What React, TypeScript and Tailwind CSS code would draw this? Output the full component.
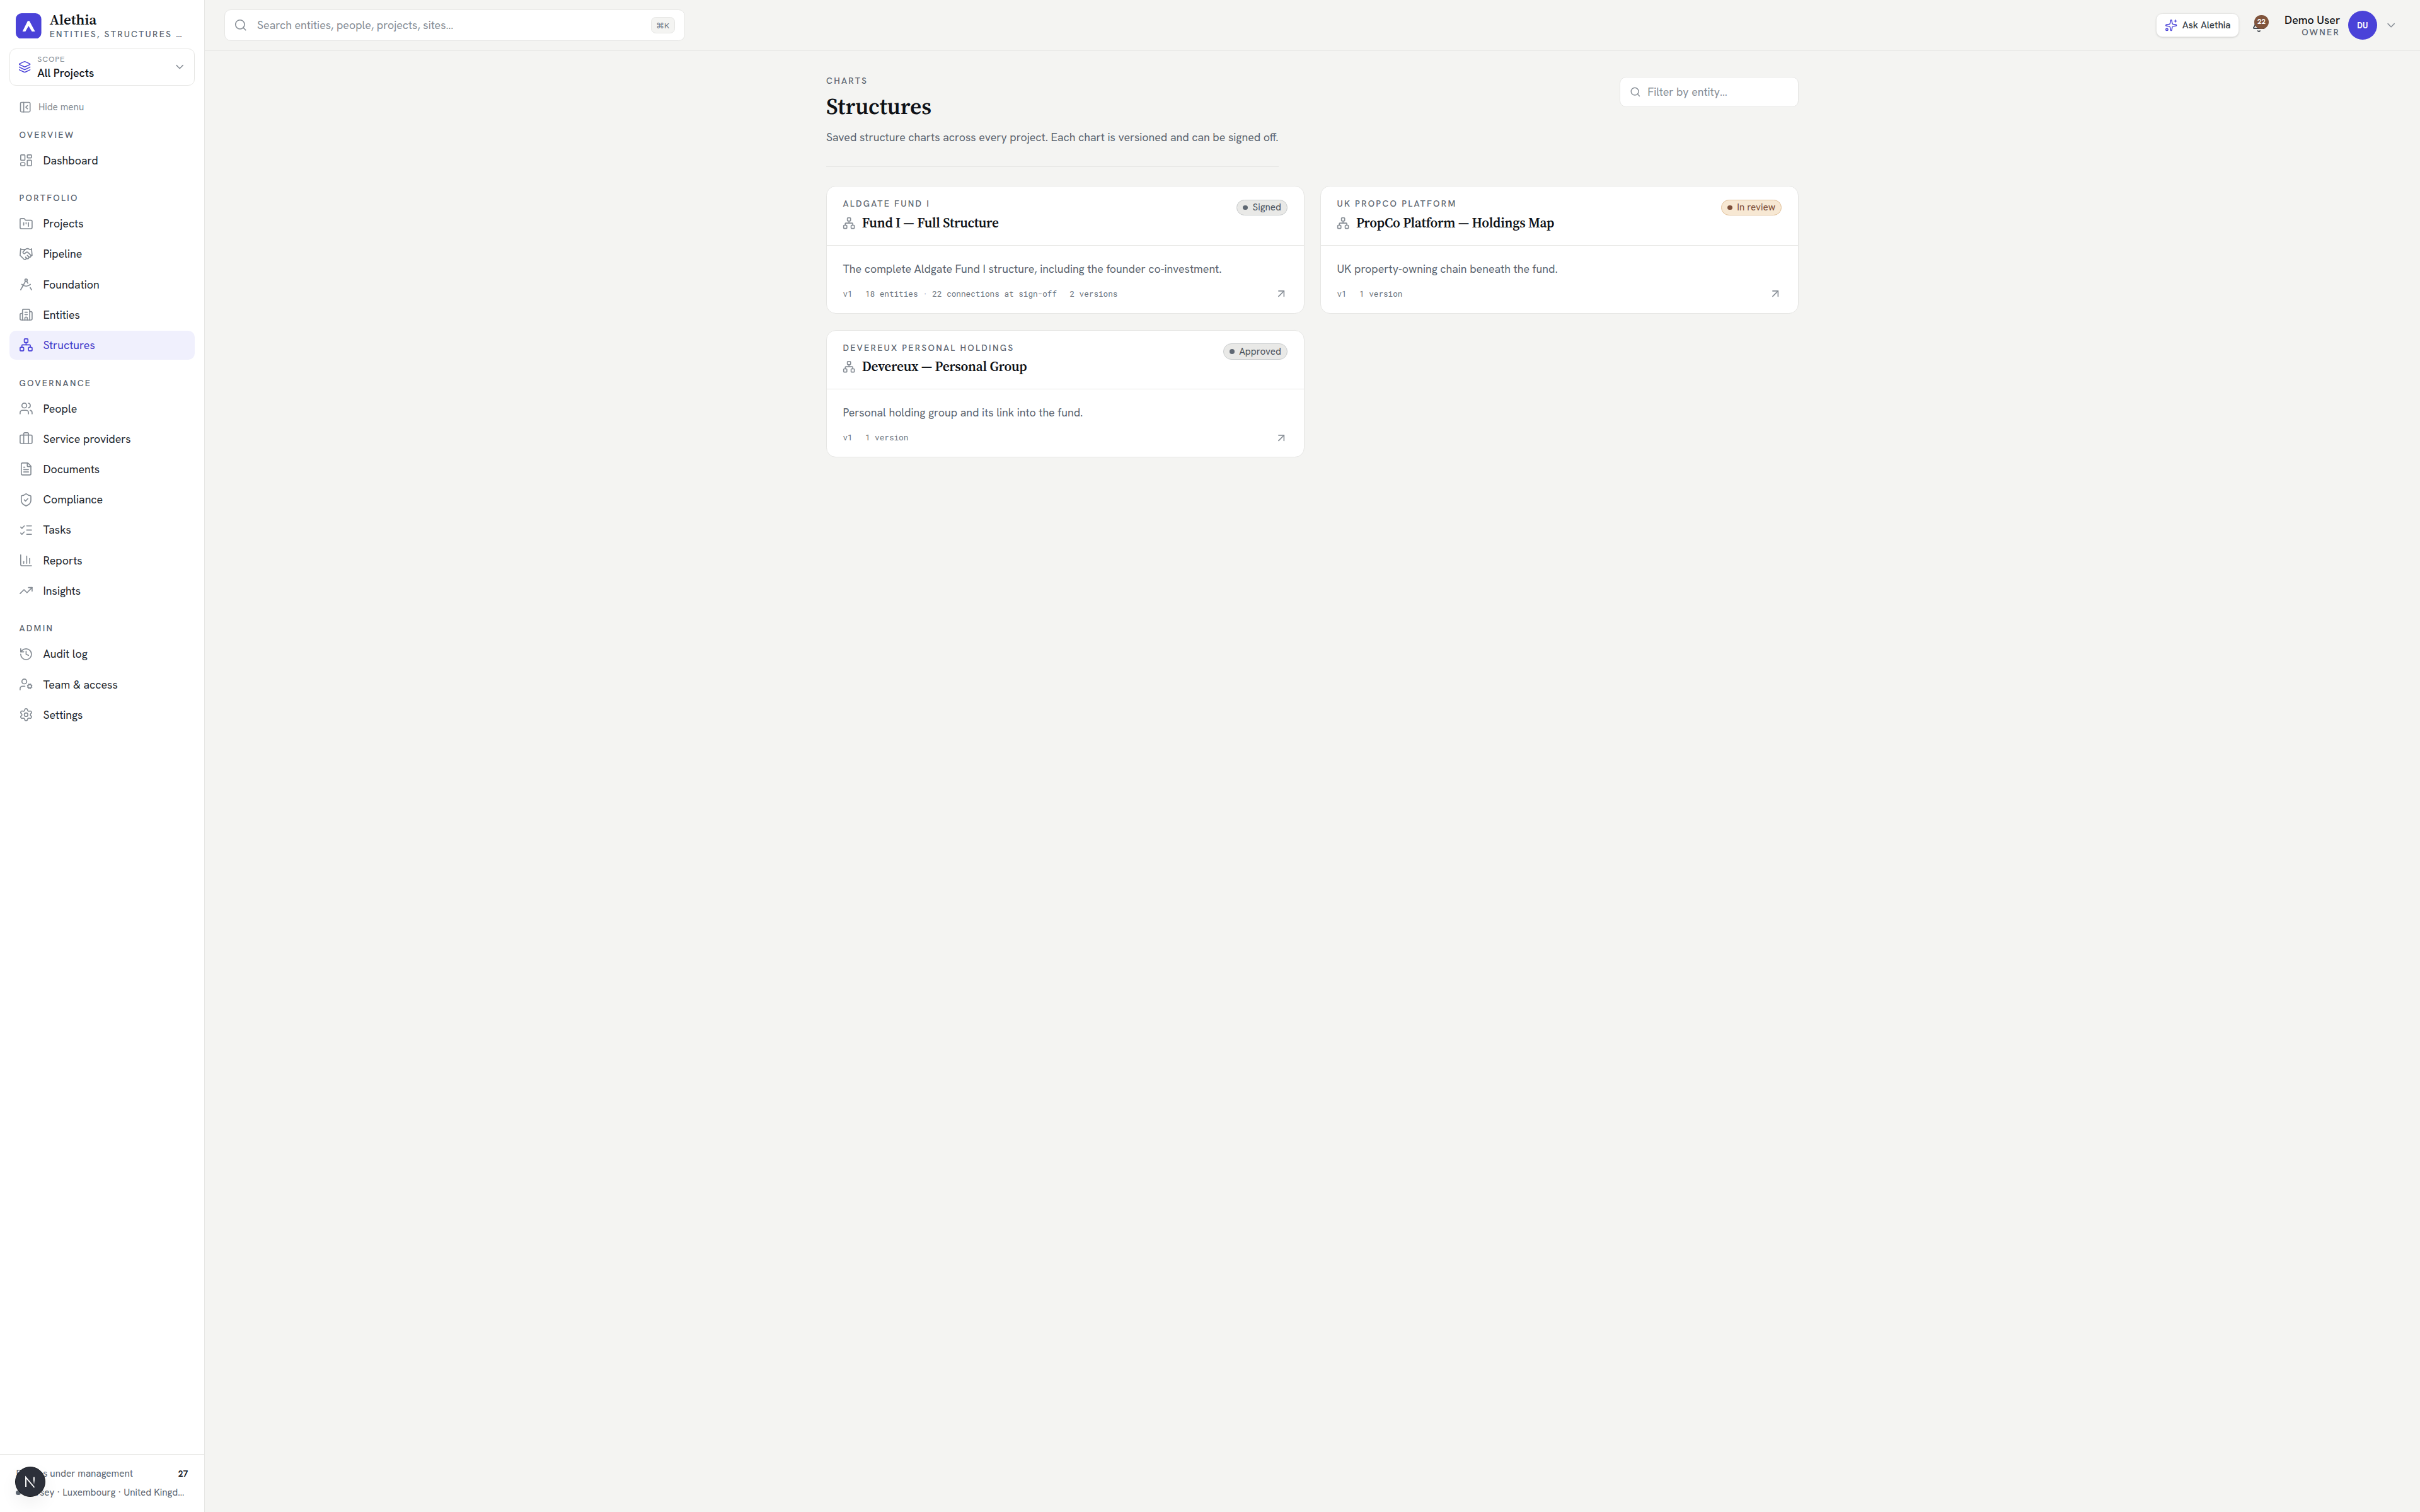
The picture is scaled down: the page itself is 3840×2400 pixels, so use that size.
import React from 'react';
import {
  ArrowUpRight, Bell, Briefcase, Building2, ChartColumn, ChevronDown, DraftingCompass, FileText,
  FolderKanban, Handshake, History, Layers, LayoutDashboard, ListChecks, Network, PanelLeftClose,
  Search, Settings, ShieldCheck, Sparkles, TrendingUp, UserCog, Users, type LucideIcon,
} from 'lucide-react';

const NAV: { title: string; items: { label: string; icon: LucideIcon; active?: boolean }[] }[] = [
  { title: 'Overview', items: [{ label: 'Dashboard', icon: LayoutDashboard }] },
  {
    title: 'Portfolio',
    items: [
      { label: 'Projects', icon: FolderKanban },
      { label: 'Pipeline', icon: Handshake },
      { label: 'Foundation', icon: DraftingCompass },
      { label: 'Entities', icon: Building2 },
      { label: 'Structures', icon: Network, active: true },
    ],
  },
  {
    title: 'Governance',
    items: [
      { label: 'People', icon: Users },
      { label: 'Service providers', icon: Briefcase },
      { label: 'Documents', icon: FileText },
      { label: 'Compliance', icon: ShieldCheck },
      { label: 'Tasks', icon: ListChecks },
      { label: 'Reports', icon: ChartColumn },
      { label: 'Insights', icon: TrendingUp },
    ],
  },
  {
    title: 'Admin',
    items: [
      { label: 'Audit log', icon: History },
      { label: 'Team & access', icon: UserCog },
      { label: 'Settings', icon: Settings },
    ],
  },
];

type Status = 'Signed' | 'In review' | 'Approved';

const CHARTS: { project: string; title: string; status: Status; description: string; meta: string[] }[] = [
  {
    project: 'Aldgate Fund I',
    title: 'Fund I — Full Structure',
    status: 'Signed',
    description: 'The complete Aldgate Fund I structure, including the founder co-investment.',
    meta: ['v1', '18 entities · 22 connections at sign-off', '2 versions'],
  },
  {
    project: 'UK PropCo Platform',
    title: 'PropCo Platform — Holdings Map',
    status: 'In review',
    description: 'UK property-owning chain beneath the fund.',
    meta: ['v1', '1 version'],
  },
  {
    project: 'Devereux Personal Holdings',
    title: 'Devereux — Personal Group',
    status: 'Approved',
    description: 'Personal holding group and its link into the fund.',
    meta: ['v1', '1 version'],
  },
];

function Eyebrow({ children, className = '' }: { children: React.ReactNode; className?: string }) {
  return (
    <div className={`text-[0.6875rem] font-medium uppercase tracking-[0.165em] text-[#5b6570] ${className}`}>
      {children}
    </div>
  );
}

function StatusBadge({ status }: { status: Status }) {
  const review = status === 'In review';
  return (
    <span
      className={`mt-[0.4px] flex h-[1.25rem] shrink-0 items-center gap-1.5 rounded-full border px-[9.4px] text-xs ${
        review ? 'border-[#e2c19a] bg-[#f7e8d3] text-[#7d4f3a]' : 'border-[#c9cccd] bg-[#e9e9e7] text-[#4b535c]'
      }`}
    >
      <span className={`size-1.5 rounded-full ${review ? 'bg-[#7d4f3a]' : 'bg-[#5f6873]'}`} />
      {status}
    </span>
  );
}

function ChartCard({ chart }: { chart: (typeof CHARTS)[number] }) {
  return (
    <article className="rounded-xl border border-[#e6e6e4] bg-white">
      <div className="flex items-start justify-between border-b border-[#e6e6e4] px-5 py-4">
        <div>
          <Eyebrow className="leading-[14px]">{chart.project}</Eyebrow>
          <div className="mt-[8.3px] flex h-[30px] items-center gap-2">
            <Network className="size-4 text-[#868d95]" strokeWidth={1.9} />
            <h2 className="font-['Source_Serif_4','Liberation_Serif',serif] text-[21.2px] font-semibold tracking-[-0.01em] text-[#0e1116]">
              {chart.title}
            </h2>
          </div>
        </div>
        <StatusBadge status={chart.status} />
      </div>
      <div className="px-5 pb-4 pt-[21.8px]">
        <p className="text-sm leading-[29px] text-[#5b6570]">{chart.description}</p>
        <div className="mt-[15.6px] flex h-4 items-center justify-between">
          <div className="flex gap-4 font-['Roboto_Mono','Liberation_Mono',monospace] text-[0.625rem] text-[#6a737d]">
            {chart.meta.map((m) => (
              <span key={m}>{m}</span>
            ))}
          </div>
          <ArrowUpRight className="size-4 text-[#868d95]" strokeWidth={1.9} />
        </div>
      </div>
    </article>
  );
}

function Sidebar() {
  return (
    <aside className="flex w-64 shrink-0 flex-col border-r border-[#e6e6e4] bg-white">
      <div className="flex h-[77px] items-start gap-2.5 px-5 pt-[20.6px]">
        <svg viewBox="0 0 122 122" className="size-8 shrink-0">
          <rect width="122" height="122" rx="28" fill="#4a42d8" />
          <path d="M57 37h8l27 50H77L61 61 46 87H32z" fill="#fff" />
        </svg>
        <div className="min-w-0">
          <div className="-mt-[0.5px] font-['Source_Serif_4','Liberation_Serif',serif] text-lg font-semibold leading-[23px] text-[#0e1116]">
            Alethia
          </div>
          <Eyebrow className="mt-[2.2px] whitespace-nowrap leading-[18px]">Entities, structures …</Eyebrow>
        </div>
      </div>

      <button className="mx-3 flex h-[59px] items-center gap-2 rounded-lg border border-[#e6e6e4] px-2.5 text-left">
        <Layers className="size-4 text-[#4a42d8]" strokeWidth={1.75} />
        <span className="flex-1">
          <span className="block text-[0.625rem] leading-[18px] tracking-[0.06em] text-[#868d95]">SCOPE</span>
          <span className="block text-sm font-medium leading-[26px] text-[#0e1116]">All Projects</span>
        </span>
        <ChevronDown className="size-4 text-[#868d95]" strokeWidth={1.75} />
      </button>

      <button className="mx-3 mt-[20.4px] flex h-[27px] items-center gap-2 px-3 text-xs text-[#868d95]">
        <PanelLeftClose className="size-4" strokeWidth={1.9} />
        Hide menu
      </button>

      <nav className="flex-1 px-3 pt-[20.2px]">
        {NAV.map((group, i) => (
          <div key={group.title} className={i > 0 ? 'mt-[26.9px]' : ''}>
            <Eyebrow className="mb-[7px] px-3 leading-[21px]">{group.title}</Eyebrow>
            <div className="flex flex-col gap-0.5">
              {group.items.map(({ label, icon: Icon, active }) => (
                <a
                  key={label}
                  className={`flex h-9 items-center gap-3 rounded-lg px-3 text-sm ${
                    active ? 'bg-[#f0f0fd] text-[#4038c8]' : 'text-[#22272e]'
                  }`}
                >
                  <Icon className={`size-[1.125rem] ${active ? 'text-[#4a42d8]' : 'text-[#868d95]'}`} strokeWidth={1.75} />
                  {label}
                </a>
              ))}
            </div>
          </div>
        ))}
      </nav>

      <div className="relative flex flex-col gap-2 border-t border-[#e6e6e4] px-5 py-4 text-xs leading-4 text-[#5b6570]">
        <div className="flex justify-between">
          <span>Entities under management</span>
          <span className="text-[0.6875rem] font-semibold text-[#0e1116]">27</span>
        </div>
        <div className="flex items-center gap-1.5 whitespace-nowrap">
          <span className="size-1.5 shrink-0 rounded-full bg-[#5f6873]" />
          <span>Jersey · Luxembourg · United Kingd…</span>
        </div>
        <div className="absolute left-[24px] top-[19px] flex size-[48px] items-center justify-center rounded-full border border-[#14161b] bg-[#2c303a] shadow-[0_12px_28px_rgba(0,0,0,0.06)]">
          <svg viewBox="0 0 20 20" className="size-[20px]" fill="none">
            <defs>
              <linearGradient id="nStem" x1="0" y1="0" x2="0" y2="1">
                <stop offset="0.4" stopColor="#fff" />
                <stop offset="1" stopColor="#fff" stopOpacity="0" />
              </linearGradient>
            </defs>
            <path d="M3 18V3L16.5 19" stroke="#fff" strokeWidth="1.9" />
            <rect x="15" y="2.5" width="1.9" height="12" fill="url(#nStem)" />
          </svg>
        </div>
      </div>
    </aside>
  );
}

function TopBar() {
  return (
    <header className="flex h-16 items-center justify-between border-b border-[#e6e6e4] pl-[31.6px] pr-[35.4px]">
      <div className="flex h-[50px] w-[36rem] items-center gap-3 rounded-lg border border-[#e6e6e4] bg-white pl-[14px] pr-[15.6px]">
        <Search className="size-[21.5px] text-[#868d95]" strokeWidth={1.75} />
        <span className="flex-1 text-sm text-[#868d95]">Search entities, people, projects, sites…</span>
        <kbd className="flex h-[26px] items-center rounded-md border border-[#e6e6e4] bg-[#f4f4f2] px-1.5 font-['Hanken_Grotesk','Inter',sans-serif] text-[0.625rem] text-[#6a737d]">
          ⌘K
        </kbd>
      </div>
      <div className="flex items-center">
        <button className="flex h-[37.5px] items-center gap-1.5 rounded-lg border border-[#e6e6e4] bg-white px-2.5 text-xs font-medium text-[#363d46] shadow-sm">
          <Sparkles className="size-4 text-[#4a42d8]" strokeWidth={1.75} />
          Ask Alethia
        </button>
        <div className="relative ml-[20px]">
          <Bell className="size-[1.125rem] text-[#363d46]" strokeWidth={1.75} />
          <span className="absolute left-[3.6px] top-[-4.5px] flex h-[21.5px] w-[23.2px] items-center justify-center rounded-full bg-[#80543c] text-[0.5625rem] font-bold text-white">
            22
          </span>
        </div>
        <div className="ml-[29px] pt-[2.4px] text-right">
          <div className="text-sm font-medium leading-[21px] text-[#0e1116]">Demo User</div>
          <Eyebrow className="leading-[19px]">Owner</Eyebrow>
        </div>
        <div className="ml-2.5 flex size-9 items-center justify-center rounded-full bg-[#4a42d8] text-[0.625rem] font-bold text-white">
          DU
        </div>
        <ChevronDown className="ml-2.5 size-4 text-[#868d95]" strokeWidth={1.75} />
      </div>
    </header>
  );
}

export default function App() {
  return (
    <>
      <style>{':root{font-size:20.3px}'}</style>
      <div className="flex h-[2400px] w-[3840px] overflow-hidden bg-[#f4f4f2] font-['Hanken_Grotesk','Inter',sans-serif]">
        <Sidebar />
        <div className="flex flex-1 flex-col">
          <TopBar />
          <main className="mx-auto w-[76rem] pt-[40.2px]">
            <div className="flex items-start justify-between">
              <div className="border-b border-[#e6e6e4] pb-[31.4px]">
                <Eyebrow className="leading-[14px]">Charts</Eyebrow>
                <h1 className="mt-[11.8px] font-['Source_Serif_4','Liberation_Serif',serif] text-[1.75rem] font-semibold leading-[44px] text-[#0e1116]">
                  Structures
                </h1>
                <p className="mt-[12px] text-sm leading-[29px] text-[#5b6570]">
                  Saved structure charts across every project. Each chart is versioned and can be signed off.
                </p>
              </div>
              <div className="mt-[0.8px] flex h-[47.5px] w-[14rem] items-center gap-[10px] rounded-lg border border-[#e6e6e4] bg-white px-[15.8px]">
                <Search className="size-[0.875rem] text-[#868d95]" strokeWidth={1.9} />
                <span className="text-sm text-[#868d95]">Filter by entity…</span>
              </div>
            </div>
            <div className="mt-[30.5px] grid grid-cols-2 gap-x-5 gap-y-[25.6px]">
              {CHARTS.map((c) => (
                <ChartCard key={c.title} chart={c} />
              ))}
            </div>
          </main>
        </div>
      </div>
    </>
  );
}
